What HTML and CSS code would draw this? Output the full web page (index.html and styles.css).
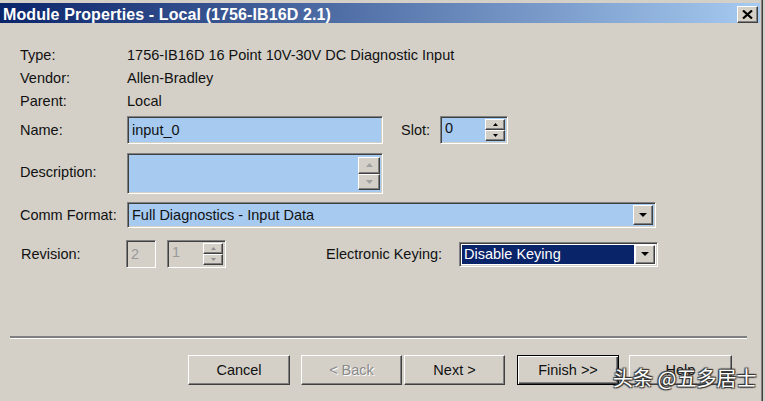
FILE: index.html
```html
<!DOCTYPE html>
<html>
<head>
<meta charset="utf-8">
<link rel="stylesheet" href="styles.css">
</head>
<body>
<div class="window">
  <div class="titlebar">
    <span class="title">Module Properties - Local (1756-IB16D 2.1)</span>
    <span class="close"><svg width="11" height="9" viewBox="0 0 11 9"><path d="M1 0.5 L10 8.5 M10 0.5 L1 8.5" stroke="#000" stroke-width="2.2"/></svg></span>
  </div>
  <div class="content">
    <div class="info">
      <div class="irow"><span class="lbl">Type:</span><span>1756-IB16D 16 Point 10V-30V DC Diagnostic Input</span></div>
      <div class="irow"><span class="lbl">Vendor:</span><span>Allen-Bradley</span></div>
      <div class="irow"><span class="lbl">Parent:</span><span>Local</span></div>
    </div>
    <div class="frow row-name">
      <span class="lbl">Name:</span>
      <div class="field f-name"><span class="ftext">input_0</span></div>
      <span class="slot-lbl">Slot:</span>
      <div class="field f-slot">
        <span class="ftext slot-text">0</span>
        <div class="spin">
          <span class="sbtn"><svg width="5" height="3" viewBox="0 0 5 3"><path d="M2.5 0 L5 3 L0 3Z" fill="#000"/></svg></span>
          <span class="sbtn"><svg width="5" height="3" viewBox="0 0 5 3"><path d="M0 0 L5 0 L2.5 3Z" fill="#000"/></svg></span>
        </div>
      </div>
    </div>
    <div class="frow row-desc">
      <span class="lbl desc-lbl">Description:</span>
      <div class="field f-desc">
        <div class="vscroll">
          <span class="sbtn"><svg width="7" height="4" viewBox="0 0 7 4"><path d="M3.5 0 L7 4 L0 4Z" fill="#a0a0a0"/></svg></span>
          <span class="sbtn"><svg width="7" height="4" viewBox="0 0 7 4"><path d="M0 0 L7 0 L3.5 4Z" fill="#a0a0a0"/></svg></span>
        </div>
      </div>
    </div>
    <div class="frow row-comm">
      <span class="lbl">Comm Format:</span>
      <div class="field f-comm">
        <span class="ftext">Full Diagnostics - Input Data</span>
        <span class="ddbtn"><svg width="8" height="4" viewBox="0 0 8 4"><path d="M0 0 L8 0 L4 4Z" fill="#000"/></svg></span>
      </div>
    </div>
    <div class="frow row-rev">
      <span class="lbl rev-lbl">Revision:</span>
      <div class="field disabled f-major"><span class="ftext">2</span></div>
      <div class="field disabled f-minor">
        <span class="ftext">1</span>
        <div class="spin">
          <span class="sbtn"><svg width="5" height="3" viewBox="0 0 5 3"><path d="M2.5 0 L5 3 L0 3Z" fill="#909090"/></svg></span>
          <span class="sbtn"><svg width="5" height="3" viewBox="0 0 5 3"><path d="M0 0 L5 0 L2.5 3Z" fill="#909090"/></svg></span>
        </div>
      </div>
      <span class="key-lbl">Electronic Keying:</span>
      <div class="field f-key">
        <span class="ftext sel">Disable Keying</span>
        <span class="ddbtn"><svg width="8" height="4" viewBox="0 0 8 4"><path d="M0 0 L8 0 L4 4Z" fill="#000"/></svg></span>
      </div>
    </div>
  </div>
  <div class="sep"></div>
  <div class="buttons">
    <span class="btn b-cancel">Cancel</span>
    <span class="btn b-back dis">&lt; Back</span>
    <span class="btn b-next">Next &gt;</span>
    <span class="btn b-finish default">Finish &gt;&gt;</span>
    <span class="btn b-help">Help</span>
  </div>
  <div class="watermark">头条 @五多居士</div>
</div>
</body>
</html>
```

FILE: styles.css
```css
html, body {
  margin: 0;
  padding: 0;
  background: #d4d0c8;
}
body {
  width: 765px;
  height: 401px;
  overflow: hidden;
  font-family: "Liberation Sans", Arial, "Noto Sans CJK SC", sans-serif;
  font-size: 14.5px;
  color: #111;
}
.window {
  position: relative;
  width: 761px;
  height: 401px;
  border-right: 1px solid #808080;
  box-shadow: 1px 0 0 #404040;
  display: flex;
  flex-direction: column;
  background: #d4d0c8;
}
.titlebar {
  margin-top: 3px;
  margin-right: 1px;
  height: 20px;
  background: linear-gradient(to right, #0a246a, #a6caf0);
  display: flex;
  align-items: center;
  justify-content: space-between;
}
.title {
  color: #fff;
  font-weight: bold;
  font-size: 16px;
  padding-left: 3px;
  padding-top: 3px;
  letter-spacing: 0.1px;
}
.close {
  width: 19px;
  height: 15px;
  margin-right: 2px;
  margin-top: 3px;
  background: #d4d0c8;
  border: 1px solid;
  border-color: #fff #404040 #404040 #fff;
  box-shadow: inset -1px -1px 0 #808080;
  display: flex;
  align-items: center;
  justify-content: center;
}
.content {
  padding-left: 20px;
  display: flex;
  flex-direction: column;
}
.info {
  padding-top: 21px;
}
.irow {
  display: flex;
  height: 23px;
  line-height: 23px;
}
.lbl {
  width: 107px;
  flex: none;
}
.desc-lbl { margin-top: -3px; }
.frow {
  display: flex;
  align-items: center;
}
.row-name { margin-top: 3px; }
.row-desc { margin-top: 9px; }
.row-comm { margin-top: 8px; }
.row-rev { margin-top: 12px; }
.field {
  box-sizing: border-box;
  background: #a6caf0;
  border: 1px solid;
  border-color: #808080 #fff #fff #808080;
  box-shadow: inset 1px 1px 0 #404040, inset -1px -1px 0 #d4d0c8;
  display: flex;
  align-items: center;
  padding: 2px;
  position: relative;
}
.ftext {
  padding-left: 2px;
  flex: 1;
  white-space: nowrap;
}
.f-name { width: 256px; height: 28px; }
.slot-lbl { margin-left: 18px; width: 39px; }
.f-slot { width: 68px; height: 28px; }
.slot-text { align-self: flex-start; padding-top: 1px; }
.spin {
  display: flex;
  flex-direction: column;
  width: 20px;
  align-self: stretch;
}
.sbtn {
  flex: 1;
  box-sizing: border-box;
  background: #d4d0c8;
  border: 1px solid;
  border-color: #fff #404040 #404040 #fff;
  box-shadow: inset -1px -1px 0 #808080;
  display: flex;
  align-items: center;
  justify-content: center;
}
.f-desc { width: 256px; height: 41px; justify-content: flex-end; }
.vscroll {
  display: flex;
  flex-direction: column;
  width: 22px;
  align-self: stretch;
  padding: 1px 0;
}
.f-comm { width: 529px; height: 26px; }
.ddbtn {
  width: 20px;
  align-self: stretch;
  box-sizing: border-box;
  background: #d4d0c8;
  border: 1px solid;
  border-color: #fff #404040 #404040 #fff;
  box-shadow: inset -1px -1px 0 #808080;
  display: flex;
  align-items: center;
  justify-content: center;
}
.rev-lbl { width: 105px; padding-left: 1px; }
.disabled {
  background: #d4d0c8;
  color: #9a9a9a;
}
.f-major { width: 30px; height: 28px; }
.f-minor { width: 59px; height: 28px; margin-left: 11px; }
.f-minor .ftext { align-self: flex-start; padding-top: 1px; }
.key-lbl { margin-left: 100px; width: 133px; }
.f-key { width: 199px; height: 25px; background: #fff; }
.sel {
  background: #0a246a;
  color: #fff;
  align-self: stretch;
  display: flex;
  align-items: center;
  margin-right: 1px;
}
.sep {
  margin: 68px 14px 0 10px;
  border-top: 2px solid #808080;
  border-bottom: 1px solid #fff;
}
.buttons {
  display: flex;
  margin-top: 16px;
  padding-left: 188px;
}
.btn {
  box-sizing: border-box;
  width: 102px;
  height: 30px;
  border: 1px solid;
  border-color: #fff #404040 #404040 #fff;
  box-shadow: inset -1px -1px 0 #808080;
  display: flex;
  align-items: center;
  justify-content: center;
  color: #111;
}
.b-back { margin-left: 11px; width: 101px; }
.b-next { margin-left: 2px; width: 101px; }
.b-finish { margin-left: 12px; }
.b-help { margin-left: 10px; width: 103px; }
.dis {
  color: #8a8a8a;
  text-shadow: 1px 1px 0 #fff;
}
.default {
  border: 1px solid #000;
  box-shadow: inset 1px 1px 0 #fff, inset -1px -1px 0 #404040, inset -2px -2px 0 #808080;
}
.watermark {
  position: absolute;
  left: 613px;
  top: 363px;
  font-family: "Noto Sans CJK SC", sans-serif;
  font-size: 20px;
  color: #fff;
  text-shadow: 1px 1px 1px #333, -1px -1px 1px #333, 1px -1px 1px #333, -1px 1px 1px #333;
  white-space: nowrap;
}
```
